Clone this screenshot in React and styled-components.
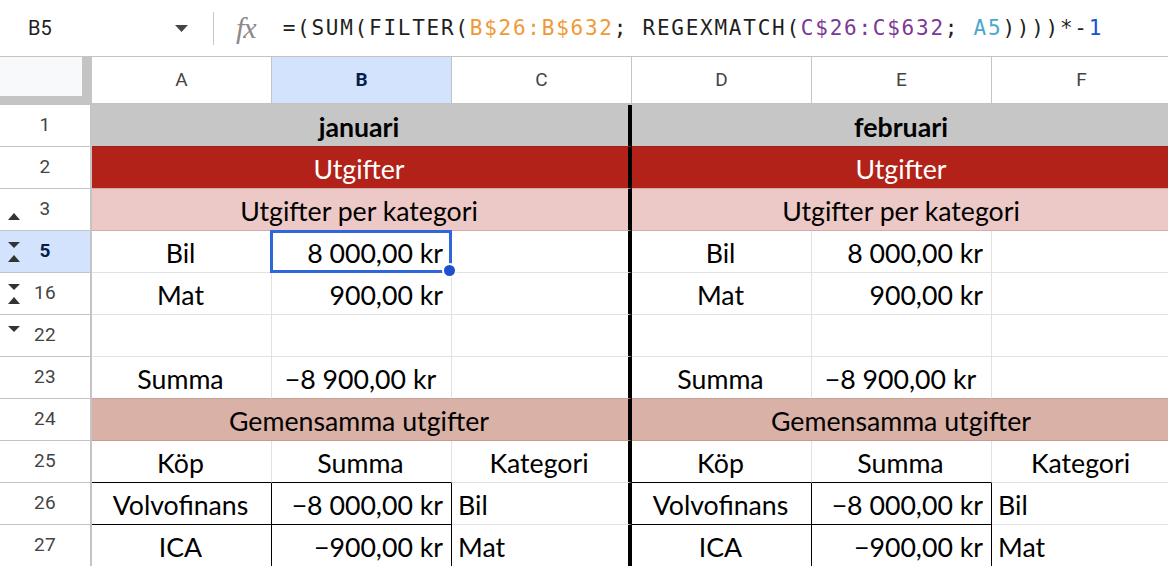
import React from 'react'
import styled, { createGlobalStyle } from 'styled-components'

const Global = createGlobalStyle`
  html, body {
    margin: 0;
    padding: 0;
    background: #fff;
  }
  body {
    width: 1168px;
    height: 566px;
    overflow: hidden;
  }
`

const GRID = '1px solid #e2e2e2'
const HEAD = '#c4c4c4'
const BLACK = '1px solid #000'
const THICK = '4px solid #000'

const Page = styled.div`
  width: 1168px;
  height: 566px;
  overflow: hidden;
  display: flex;
  flex-direction: column;
`

/* ---------------- formula bar ---------------- */

const FormulaBar = styled.div`
  height: 56px;
  flex: none;
  border-bottom: 1px solid ${HEAD};
  display: flex;
  align-items: center;
`

const NameBox = styled.div`
  width: 213px;
  box-sizing: border-box;
  padding: 0 25px 0 28px;
  display: flex;
  align-items: center;
  justify-content: space-between;
  font: 20px Roboto, sans-serif;
  color: #1f1f1f;
`

const Divider = styled.div`
  width: 1px;
  height: 33px;
  background: #c7c7c7;
`

const Fx = styled.span`
  margin: 0 27px 0 22px;
  font: italic 30px "Liberation Serif", serif;
  color: #8a8a8a;
  letter-spacing: -1px;
`

const Formula = styled.div`
  font: 21px "DejaVu Sans Mono", monospace;
  letter-spacing: 1.75px;
  color: #1f1f1f;
  white-space: nowrap;
`

const Ref = styled.span`
  color: ${p => p.$c};
`

/* ---------------- grid ---------------- */

const Grid = styled.div`
  display: grid;
  grid-template-columns: 92px repeat(6, 180px);
  grid-template-rows: 48px;
  grid-auto-rows: 42px;
`

const Corner = styled.div`
  box-sizing: border-box;
  background: #f8f9fa;
  border-right: 10px solid ${HEAD};
  border-bottom: 9px solid ${HEAD};
`

const ColHead = styled.div`
  box-sizing: border-box;
  display: flex;
  align-items: center;
  justify-content: center;
  padding-bottom: 2px;
  border-right: 1px solid ${HEAD};
  border-bottom: 2px solid ${HEAD};
  background: ${p => (p.$sel ? '#d3e3fd' : '#fff')};
  color: ${p => (p.$sel ? '#041e49' : '#444')};
  font: ${p => (p.$sel ? 700 : 400)} 19px Roboto, sans-serif;
`

const RowHead = styled.div`
  box-sizing: border-box;
  display: grid;
  grid-template-columns: 24px 1fr 24px;
  border-right: 2px solid ${HEAD};
  border-bottom: 1px solid ${HEAD};
  background: ${p => (p.$sel ? '#d3e3fd' : '#fff')};
  color: ${p => (p.$sel ? '#041e49' : '#444')};
  font: ${p => (p.$sel ? 700 : 400)} 19px Roboto, sans-serif;
  letter-spacing: 0.3px;
`

const RowNum = styled.span`
  display: flex;
  align-items: center;
  justify-content: center;
  padding-bottom: 2px;
`

const ArrowSlot = styled.span`
  padding: 11px 0 0 7px;
`

const Cell = styled.div`
  box-sizing: border-box;
  position: relative;
  z-index: ${p => (p.$sel ? 1 : 'auto')};
  display: flex;
  align-items: center;
  justify-content: ${p =>
    p.$align === 'right' ? 'flex-end' : p.$align === 'left' ? 'flex-start' : 'center'};
  padding: 2px 8px 0 6px;
  border-right: ${p => p.$right || GRID};
  border-bottom: ${p => p.$bottom || GRID};
  font: 26.7px Lato, sans-serif;
  color: #000;
  white-space: nowrap;
`

const Band = styled(Cell)`
  grid-column: span 3;
  background: ${p => p.$bg};
  color: ${p => p.$color || '#000'};
  font-weight: ${p => (p.$bold ? 700 : 400)};
`

const Selection = styled.div`
  position: absolute;
  left: -2px;
  top: -1px;
  right: -1px;
  bottom: -1px;
  border: 3px solid #2f66d9;
  pointer-events: none;
`

const Handle = styled.div`
  position: absolute;
  right: -8px;
  bottom: -8px;
  width: 15px;
  height: 15px;
  box-sizing: border-box;
  border-radius: 50%;
  background: #1f4fcf;
  border: 2px solid #fff;
`

const Arrows = ({ up, down }) => (
  <svg width="14" height="20" viewBox="0 0 14 20">
    {down && <polygon points="1,0 13,0 7,6" fill="#333" />}
    {up && <polygon points="1,20 13,20 7,13" fill="#333" />}
  </svg>
)

const Caret = () => (
  <svg width="13" height="7" viewBox="0 0 13 7">
    <polygon points="0,0 13,0 6.5,7" fill="#444" />
  </svg>
)

/* ---------------- data ---------------- */

const bands = {
  1: { bg: '#c6c6c6', bold: true, bottom: '1px solid #a31e18', text: ['januari', 'februari'] },
  2: { bg: '#b22219', color: '#fff', bottom: '1px solid #d2aba9', text: ['Utgifter', 'Utgifter'] },
  3: { bg: '#ecc9c7', bottom: '1px solid #d2adac', text: ['Utgifter per kategori', 'Utgifter per kategori'] },
  24: { bg: '#dab1a7', bottom: '1px solid #c59c93', text: ['Gemensamma utgifter', 'Gemensamma utgifter'] },
}

const rows = [
  { n: 1 },
  { n: 2 },
  { n: 3, up: true },
  { n: 5, down: true, up: true, sel: true, cells: ['Bil', '8 000,00 kr', ''], amt: 'right' },
  { n: 16, down: true, up: true, cells: ['Mat', '900,00 kr', ''], amt: 'right' },
  { n: 22, down: true, cells: ['', '', ''] },
  { n: 23, cells: ['Summa', '\u22128 900,00 kr', ''], amt: 'center', under: '1px solid #c9a39a' },
  { n: 24 },
  { n: 25, cells: ['Köp', 'Summa', 'Kategori'], amt: 'center', cat: 'center', boxBottom: true },
  { n: 26, cells: ['Volvofinans', '\u22128 000,00 kr', 'Bil'], amt: 'right', cat: 'left', boxed: true },
  { n: 27, cells: ['ICA', '\u2212900,00 kr', 'Mat'], amt: 'right', cat: 'left', boxed: true },
]

const Side = ({ row, first }) => {
  const band = bands[row.n]
  if (band) {
    return (
      <Band
        $bg={band.bg}
        $color={band.color}
        $bold={band.bold}
        $bottom={band.bottom}
        $right={first ? THICK : 'none'}
      >
        {band.text[first ? 0 : 1]}
      </Band>
    )
  }
  const [label, amount, cat] = row.cells
  const boxBottom = row.boxBottom || row.boxed ? BLACK : row.under
  const boxRight = row.boxed ? BLACK : undefined
  const selected = first && row.sel
  return (
    <>
      <Cell $bottom={boxBottom} $right={boxRight}>{label}</Cell>
      <Cell $bottom={boxBottom} $right={boxRight} $align={row.amt} $sel={selected}>
        {amount}
        {selected && (
          <Selection>
            <Handle />
          </Selection>
        )}
      </Cell>
      <Cell $bottom={row.under} $right={first ? THICK : undefined} $align={row.cat}>
        {cat}
      </Cell>
    </>
  )
}

export default function App() {
  return (
    <Page>
      <Global />
      <FormulaBar>
        <NameBox>
          <span>B5</span>
          <Caret />
        </NameBox>
        <Divider />
        <Fx>fx</Fx>
        <Formula>
          =(SUM(FILTER(<Ref $c="#ee9a35">B$26:B$632</Ref>; REGEXMATCH(
          <Ref $c="#7b3894">C$26:C$632</Ref>; <Ref $c="#4ba6d1">A5</Ref>))))*-
          <Ref $c="#1a4fcf">1</Ref>
        </Formula>
      </FormulaBar>

      <Grid>
        <Corner />
        {['A', 'B', 'C', 'D', 'E', 'F'].map(c => (
          <ColHead key={c} $sel={c === 'B'}>{c}</ColHead>
        ))}
        {rows.map(row => (
          <React.Fragment key={row.n}>
            <RowHead $sel={row.sel}>
              <ArrowSlot>
                {(row.up || row.down) && <Arrows up={row.up} down={row.down} />}
              </ArrowSlot>
              <RowNum>{row.n}</RowNum>
              <span />
            </RowHead>
            <Side row={row} first />
            <Side row={row} />
          </React.Fragment>
        ))}
      </Grid>
    </Page>
  )
}
